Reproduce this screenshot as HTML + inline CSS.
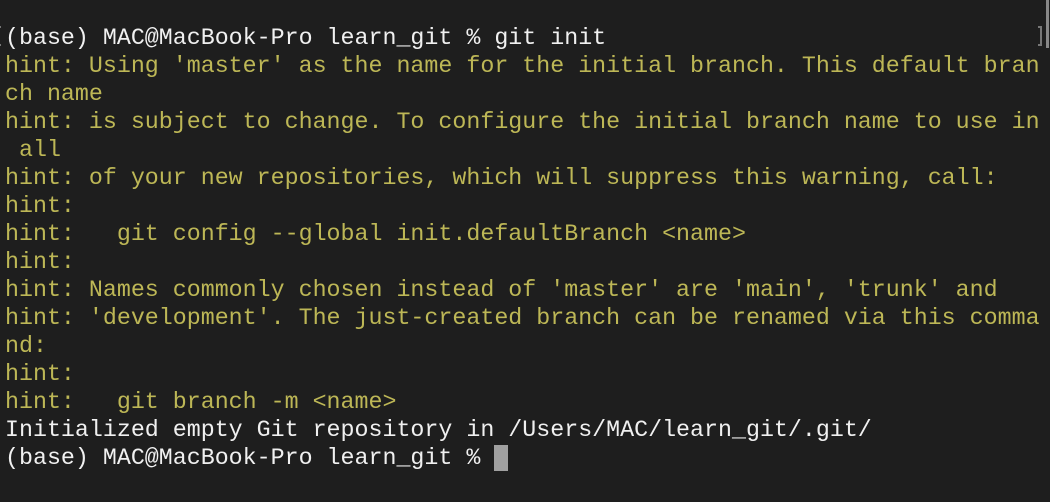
<!DOCTYPE html>
<html><head><meta charset="utf-8"><style>
html,body{margin:0;padding:0;background:#1e1e1e;width:1050px;height:502px;overflow:hidden}
pre{margin:0;position:absolute;left:5px;top:24px;font-family:"Liberation Mono",monospace;font-size:23.3px;line-height:28px;color:#bdb756}
.w{color:#f0f0f0}
.cur{display:inline-block;width:14px;height:26px;background:#a0a0a0;vertical-align:top;margin-top:1px}
.lb{position:absolute;left:-3px;top:26px;width:4px;height:20px;border:2px solid #777;border-right:none;box-sizing:border-box}
.rb{position:absolute;left:1038px;top:26px;width:4px;height:20px;border:2px solid #777;border-left:none;box-sizing:border-box}
.sb{position:absolute;left:1046px;top:0;width:3px;height:48px;background:#888}
</style></head><body>
<div class="lb"></div><div class="rb"></div><div class="sb"></div>
<pre><span class="w">(base) MAC@MacBook-Pro learn_git % git init</span>
hint: Using 'master' as the name for the initial branch. This default bran
ch name
hint: is subject to change. To configure the initial branch name to use in
 all
hint: of your new repositories, which will suppress this warning, call:
hint:
hint:   git config --global init.defaultBranch &lt;name&gt;
hint:
hint: Names commonly chosen instead of 'master' are 'main', 'trunk' and
hint: 'development'. The just-created branch can be renamed via this comma
nd:
hint:
hint:   git branch -m &lt;name&gt;
<span class="w">Initialized empty Git repository in /Users/MAC/learn_git/.git/
(base) MAC@MacBook-Pro learn_git % <span class="cur"></span></span></pre>
</body></html>
